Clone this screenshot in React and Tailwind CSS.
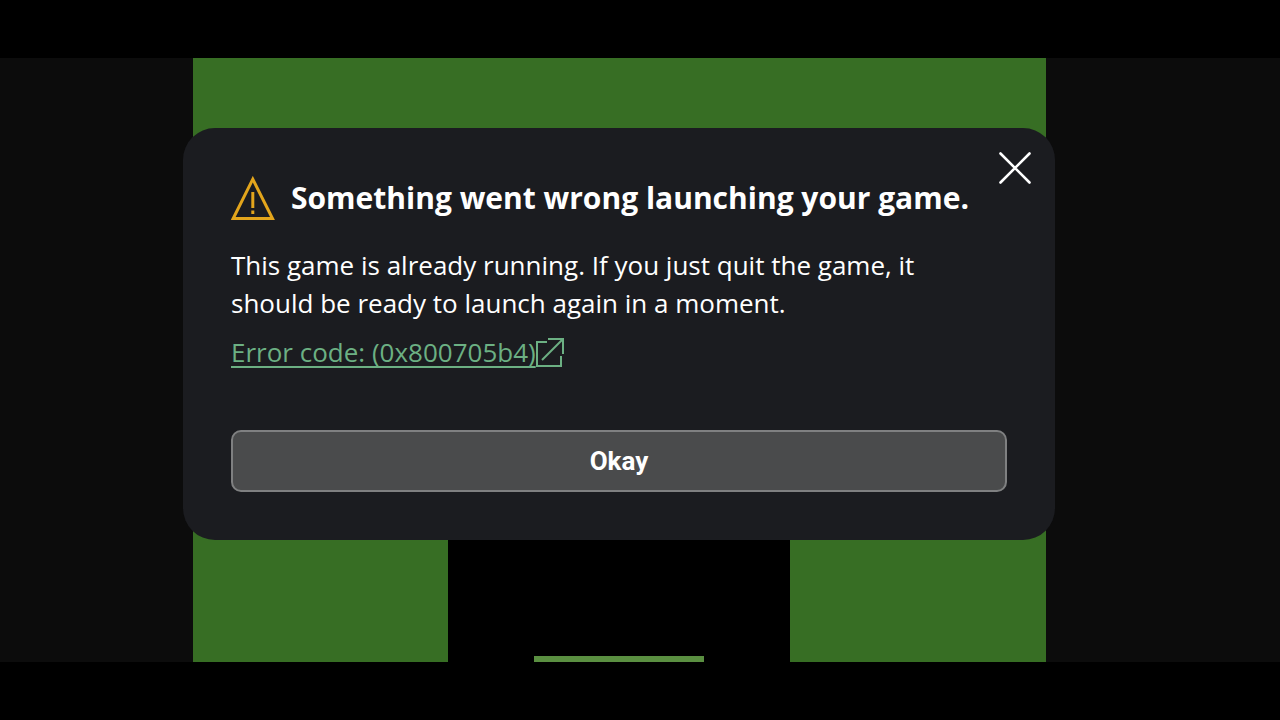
import React, { useState } from "react";

function WarningIcon() {
  return (
    <svg className="h-11 w-11 shrink-0" viewBox="0 0 44 44" fill="none" stroke="#e3a51c" aria-hidden="true">
      <path d="M21.8 3.2L41.5 42.5H2.2Z" strokeWidth="3" />
      <path d="M21.8 16V32" strokeWidth="3" />
      <path d="M21.8 34.5V38" strokeWidth="3" />
    </svg>
  );
}

function CloseIcon() {
  return (
    <svg className="h-8 w-8" viewBox="0 0 32 32" fill="none" stroke="currentColor" strokeWidth="2.6" strokeLinecap="round" aria-hidden="true">
      <path d="M1.5 1.5L30.5 30.5M30.5 1.5L1.5 30.5" />
    </svg>
  );
}

function ExternalIcon() {
  return (
    <svg className="h-8 w-7" viewBox="0 0 28 32" fill="none" stroke="currentColor" strokeWidth="2" aria-hidden="true">
      <path d="M11 6H1V30H25V20" />
      <path d="M12 3H27V18" />
      <path d="M27 3L6 24" />
    </svg>
  );
}

// green creeper-like face behind the dialog
function GameArt() {
  return (
    <div className="col-start-1 row-start-1 flex w-full max-w-[853px] flex-col justify-end justify-self-center bg-[#376e24]">
      <div className="flex h-[170px] w-2/5 items-end justify-center self-center bg-black">
        <div className="h-1.5 w-1/2 bg-[#5a8f41]" />
      </div>
    </div>
  );
}

export default function App() {
  const [open, setOpen] = useState(true);

  return (
    <div className="flex min-h-screen flex-col bg-black py-[58px] font-['Open_Sans','Noto_Sans',sans-serif]">
      <main className="grid flex-1 grid-cols-1 bg-[#0c0c0c] pr-[42px]">
        <GameArt />
        {open && (
          <div
            role="dialog"
            aria-labelledby="dialog-title"
            className="relative col-start-1 row-start-1 mt-[70px] w-full max-w-[872px] self-start justify-self-center rounded-[32px] bg-[#1b1c20] p-12 text-white"
          >
            <button
              type="button"
              aria-label="Close"
              onClick={() => setOpen(false)}
              className="absolute top-6 right-6"
            >
              <CloseIcon />
            </button>
            <div className="flex items-center gap-4">
              <WarningIcon />
              <h1 id="dialog-title" className="text-[30px] leading-[44px] font-bold whitespace-nowrap">
                Something went wrong launching your game.
              </h1>
            </div>
            <p className="mt-[26px] text-[26px] leading-[38px]">
              This game is already running. If you just quit the game, it
              <br />
              should be ready to launch again in a moment.
            </p>
            <a href="#error" className="mt-3 inline-flex items-center text-[26px] leading-[36px] text-[#6cb083] underline decoration-2 underline-offset-4">
              Error code: (0x800705b4)
              <ExternalIcon />
            </a>
            <button
              type="button"
              onClick={() => setOpen(false)}
              className="mt-[60px] block h-[62px] w-full rounded-[10px] border-2 border-[#7f8081] bg-[#4a4b4c] font-['Roboto',sans-serif] text-[26px] font-bold"
            >
              Okay
            </button>
          </div>
        )}
      </main>
    </div>
  );
}
